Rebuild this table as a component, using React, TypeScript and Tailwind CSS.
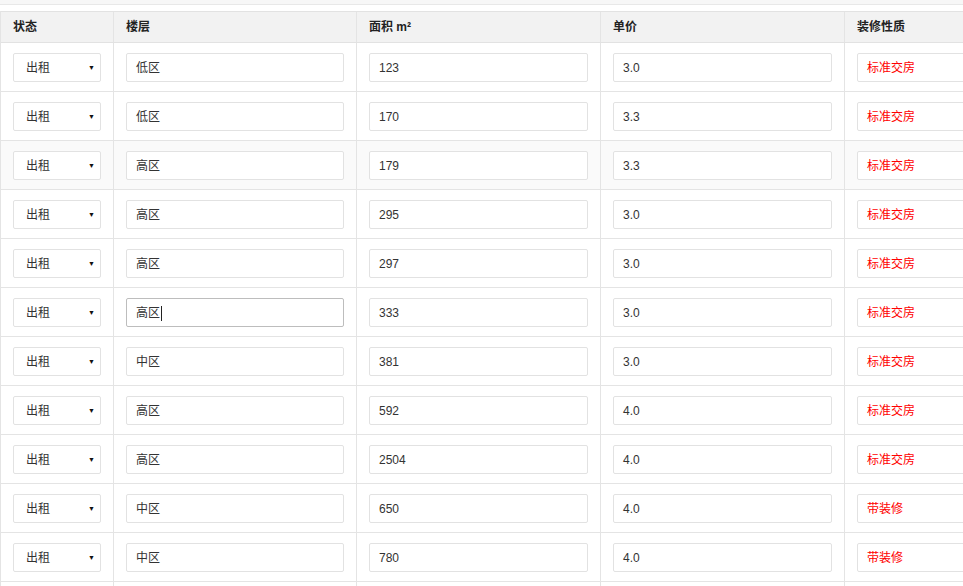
import React from 'react';

type Row = { floor: string; area: string; price: string; deco: string };

const rows: Row[] = [
  { floor: '低区', area: '123', price: '3.0', deco: '标准交房' },
  { floor: '低区', area: '170', price: '3.3', deco: '标准交房' },
  { floor: '高区', area: '179', price: '3.3', deco: '标准交房' },
  { floor: '高区', area: '295', price: '3.0', deco: '标准交房' },
  { floor: '高区', area: '297', price: '3.0', deco: '标准交房' },
  { floor: '高区', area: '333', price: '3.0', deco: '标准交房' },
  { floor: '中区', area: '381', price: '3.0', deco: '标准交房' },
  { floor: '高区', area: '592', price: '4.0', deco: '标准交房' },
  { floor: '高区', area: '2504', price: '4.0', deco: '标准交房' },
  { floor: '中区', area: '650', price: '4.0', deco: '带装修' },
  { floor: '中区', area: '780', price: '4.0', deco: '带装修' },
];

const font = { fontFamily: '"Liberation Sans", "Noto Sans CJK SC", sans-serif' };

const cell = 'shrink-0 border-r border-[#e4e4e4] px-3 flex items-center';

function Field({ value, focused, red }: { value: string; focused?: boolean; red?: boolean }) {
  return (
    <div
      className={`w-full h-[29px] rounded-[2px] border bg-white pl-[9px] pt-[2px] flex items-center text-xs ${
        focused ? 'border-[#bdbdbd]' : 'border-[#e2e2e2]'
      } ${red ? 'text-[#ff0000]' : 'text-[#333]'}`}
    >
      {value}
      {focused && <span className="inline-block w-px h-[15px] bg-[#222] ml-px" />}
    </div>
  );
}

export default function App() {
  return (
    <div className="w-[963px] h-[586px] overflow-hidden bg-white" style={font}>
      {/* top strip */}
      <div className="h-[5px] bg-[#f7f7f7] border-b border-[#e8e8e8]" />
      <div className="h-[6px]" />

      <div className="w-[1100px] border-l border-[#e4e4e4]">
        {/* header */}
        <div className="flex h-[32px] bg-[#f2f2f2] border-y border-[#e2e2e2] text-xs font-bold text-[#222]">
          <div className={`${cell} w-[113px]`}>状态</div>
          <div className={`${cell} w-[243px]`}>楼层</div>
          <div className={`${cell} w-[244px]`}>面积 m²</div>
          <div className={`${cell} w-[244px]`}>单价</div>
          <div className={`${cell} w-[256px]`}>装修性质</div>
        </div>

        {rows.map((r, i) => (
          <div
            key={i}
            className={`flex h-[49px] border-b border-[#e4e4e4] ${i === 2 ? 'bg-[#fafafa]' : 'bg-white'}`}
          >
            <div className={`${cell} w-[113px]`}>
              <div className="w-full h-[29px] rounded-[2px] border border-[#e2e2e2] bg-white pl-3 pr-[5px] pt-[2px] flex items-center justify-between text-xs text-[#333]">
                <span>出租</span>
                <span className="text-[7px] text-[#111]">▼</span>
              </div>
            </div>
            <div className={`${cell} w-[243px]`}>
              <Field value={r.floor} focused={i === 5} />
            </div>
            <div className={`${cell} w-[244px]`}>
              <Field value={r.area} />
            </div>
            <div className={`${cell} w-[244px]`}>
              <Field value={r.price} />
            </div>
            <div className={`${cell} w-[256px]`}>
              <Field value={r.deco} red />
            </div>
          </div>
        ))}

        {/* next row, just starting below the fold */}
        <div className="flex h-[49px]">
          <div className={`${cell} w-[113px]`} />
          <div className={`${cell} w-[243px]`} />
          <div className={`${cell} w-[244px]`} />
          <div className={`${cell} w-[244px]`} />
          <div className={`${cell} w-[256px]`} />
        </div>
      </div>
    </div>
  );
}
